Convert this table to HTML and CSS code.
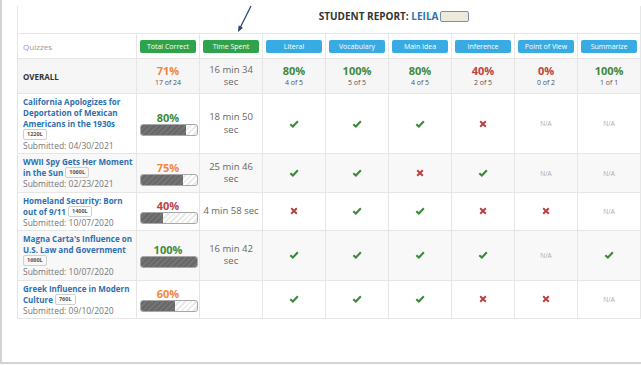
FILE: index.html
```html
<!DOCTYPE html>
<html lang="en">
<head>
<meta charset="utf-8">
<title>Student Report</title>
<link rel="stylesheet" href="styles.css">
</head>
<body>
<div class="frame">
  <svg class="arrow" width="30" height="34" viewBox="0 0 30 34">
    <line x1="21" y1="4" x2="10.5" y2="25" stroke="#2c4370" stroke-width="1.2"/>
    <polygon points="8,30 13,25.8 8.6,23.6" fill="#2c4370"/>
  </svg>
  <table class="report">
    <colgroup>
      <col class="c-quiz">
      <col class="c-data"><col class="c-data"><col class="c-data"><col class="c-data">
      <col class="c-data"><col class="c-data"><col class="c-data"><col class="c-data">
    </colgroup>
    <thead>
      <tr class="title-row">
        <th colspan="9"><span class="title">STUDENT REPORT: <span class="name">LEILA</span></span><span class="redact"></span></th>
      </tr>
      <tr class="head-row">
        <th class="quizzes">Quizzes</th>
        <th><span class="tag green">Total Correct</span></th>
        <th><span class="tag green">Time Spent</span></th>
        <th><span class="tag blue">Literal</span></th>
        <th><span class="tag blue">Vocabulary</span></th>
        <th><span class="tag blue">Main Idea</span></th>
        <th><span class="tag blue">Inference</span></th>
        <th><span class="tag blue">Point of View</span></th>
        <th><span class="tag blue">Summarize</span></th>
      </tr>
    </thead>
    <tbody>
      <tr class="overall">
        <td class="overall-label">OVERALL</td>
        <td><div class="pct orange">71%</div><div class="sub">17 of 24</div></td>
        <td class="time">16 min 34 sec</td>
        <td><div class="pct green-t">80%</div><div class="sub">4 of 5</div></td>
        <td><div class="pct green-t">100%</div><div class="sub">5 of 5</div></td>
        <td><div class="pct green-t">80%</div><div class="sub">4 of 5</div></td>
        <td><div class="pct red-t">40%</div><div class="sub">2 of 5</div></td>
        <td><div class="pct red-t">0%</div><div class="sub">0 of 2</div></td>
        <td><div class="pct green-t">100%</div><div class="sub">1 of 1</div></td>
      </tr>
      <tr>
        <td class="quiz"><a class="qt" href="#">California Apologizes for Deportation of Mexican Americans in the 1930s</a> <span class="lex">1220L</span><span class="sub-date">Submitted: 04/30/2021</span></td>
        <td><div class="pct green-t">80%</div><div class="bar"><div class="fill" style="width:80%"></div></div></td>
        <td class="time">18 min 50 sec</td>
        <td><svg class="ok" viewBox="0 0 12 10"><path d="M1.4 5.2 L4.6 8.2 L10.8 1.6"/></svg></td>
        <td><svg class="ok" viewBox="0 0 12 10"><path d="M1.4 5.2 L4.6 8.2 L10.8 1.6"/></svg></td>
        <td><svg class="ok" viewBox="0 0 12 10"><path d="M1.4 5.2 L4.6 8.2 L10.8 1.6"/></svg></td>
        <td><svg class="no" viewBox="0 0 10 10"><path d="M1.5 1.5 L8.5 8.5 M8.5 1.5 L1.5 8.5"/></svg></td>
        <td class="na">N/A</td>
        <td class="na">N/A</td>
      </tr>
      <tr class="alt">
        <td class="quiz"><a class="qt" href="#">WWII Spy Gets Her Moment in the Sun</a> <span class="lex">1060L</span><span class="sub-date">Submitted: 02/23/2021</span></td>
        <td><div class="pct orange">75%</div><div class="bar"><div class="fill" style="width:75%"></div></div></td>
        <td class="time">25 min 46 sec</td>
        <td><svg class="ok" viewBox="0 0 12 10"><path d="M1.4 5.2 L4.6 8.2 L10.8 1.6"/></svg></td>
        <td><svg class="ok" viewBox="0 0 12 10"><path d="M1.4 5.2 L4.6 8.2 L10.8 1.6"/></svg></td>
        <td><svg class="no" viewBox="0 0 10 10"><path d="M1.5 1.5 L8.5 8.5 M8.5 1.5 L1.5 8.5"/></svg></td>
        <td><svg class="ok" viewBox="0 0 12 10"><path d="M1.4 5.2 L4.6 8.2 L10.8 1.6"/></svg></td>
        <td class="na">N/A</td>
        <td class="na">N/A</td>
      </tr>
      <tr>
        <td class="quiz"><a class="qt" href="#">Homeland Security: Born out of 9/11</a> <span class="lex">1400L</span><span class="sub-date">Submitted: 10/07/2020</span></td>
        <td><div class="pct red-t">40%</div><div class="bar"><div class="fill" style="width:40%"></div></div></td>
        <td class="time">4 min 58 sec</td>
        <td><svg class="no" viewBox="0 0 10 10"><path d="M1.5 1.5 L8.5 8.5 M8.5 1.5 L1.5 8.5"/></svg></td>
        <td><svg class="ok" viewBox="0 0 12 10"><path d="M1.4 5.2 L4.6 8.2 L10.8 1.6"/></svg></td>
        <td><svg class="ok" viewBox="0 0 12 10"><path d="M1.4 5.2 L4.6 8.2 L10.8 1.6"/></svg></td>
        <td><svg class="no" viewBox="0 0 10 10"><path d="M1.5 1.5 L8.5 8.5 M8.5 1.5 L1.5 8.5"/></svg></td>
        <td><svg class="no" viewBox="0 0 10 10"><path d="M1.5 1.5 L8.5 8.5 M8.5 1.5 L1.5 8.5"/></svg></td>
        <td class="na">N/A</td>
      </tr>
      <tr class="alt">
        <td class="quiz"><a class="qt" href="#">Magna Carta's Influence on U.S. Law and Government</a> <span class="lex">1660L</span><span class="sub-date">Submitted: 10/07/2020</span></td>
        <td><div class="pct green-t">100%</div><div class="bar"><div class="fill" style="width:100%"></div></div></td>
        <td class="time">16 min 42 sec</td>
        <td><svg class="ok" viewBox="0 0 12 10"><path d="M1.4 5.2 L4.6 8.2 L10.8 1.6"/></svg></td>
        <td><svg class="ok" viewBox="0 0 12 10"><path d="M1.4 5.2 L4.6 8.2 L10.8 1.6"/></svg></td>
        <td><svg class="ok" viewBox="0 0 12 10"><path d="M1.4 5.2 L4.6 8.2 L10.8 1.6"/></svg></td>
        <td><svg class="ok" viewBox="0 0 12 10"><path d="M1.4 5.2 L4.6 8.2 L10.8 1.6"/></svg></td>
        <td class="na">N/A</td>
        <td><svg class="ok" viewBox="0 0 12 10"><path d="M1.4 5.2 L4.6 8.2 L10.8 1.6"/></svg></td>
      </tr>
      <tr>
        <td class="quiz"><a class="qt" href="#">Greek Influence in Modern Culture</a> <span class="lex">760L</span><span class="sub-date">Submitted: 09/10/2020</span></td>
        <td><div class="pct orange">60%</div><div class="bar"><div class="fill" style="width:60%"></div></div></td>
        <td class="time"></td>
        <td><svg class="ok" viewBox="0 0 12 10"><path d="M1.4 5.2 L4.6 8.2 L10.8 1.6"/></svg></td>
        <td><svg class="ok" viewBox="0 0 12 10"><path d="M1.4 5.2 L4.6 8.2 L10.8 1.6"/></svg></td>
        <td><svg class="ok" viewBox="0 0 12 10"><path d="M1.4 5.2 L4.6 8.2 L10.8 1.6"/></svg></td>
        <td><svg class="no" viewBox="0 0 10 10"><path d="M1.5 1.5 L8.5 8.5 M8.5 1.5 L1.5 8.5"/></svg></td>
        <td><svg class="no" viewBox="0 0 10 10"><path d="M1.5 1.5 L8.5 8.5 M8.5 1.5 L1.5 8.5"/></svg></td>
        <td class="na">N/A</td>
      </tr>
    </tbody>
  </table>
</div>
</body>
</html>
```
FILE: styles.css
```css
body {
  margin: 0;
  background: #fff;
  font-family: "Open Sans", "Liberation Sans", sans-serif;
  color: #555;
}

.frame {
  position: relative;
  box-sizing: border-box;
  height: 364px;
  border-left: 2px solid #d2d2d2;
  border-bottom: 2px solid #d2d2d2;
  padding: 6px 0 0 15px;
}

.arrow {
  position: absolute;
  left: 228px;
  top: 2px;
}

.report {
  border-collapse: collapse;
  table-layout: fixed;
  width: 623px;
}

.c-quiz { width: 119px; }
.c-data { width: 63px; }

.report th,
.report td {
  border: 1px solid #e6e6e6;
  text-align: center;
  vertical-align: middle;
  padding: 0 3px;
}

/* title row */
.title-row th {
  border-top: none;
  padding: 3px 0 10px 130px;
  line-height: 14px;
  font-size: 10px;
  font-weight: 700;
  color: #333;
}
.name { color: #2f72b5; }
.redact {
  display: inline-block;
  box-sizing: border-box;
  width: 29px;
  height: 11px;
  margin-left: 2px;
  vertical-align: -2px;
  background: #ece9dd;
  border: 1px solid #7d8ea9;
  border-radius: 2px;
}

/* header row */
.head-row th {
  height: 24px;
  padding: 0 3px;
  font-weight: 400;
}
.head-row .quizzes {
  text-align: left;
  padding-left: 5px;
  font-size: 8px;
  color: #999;
}
.tag {
  display: block;
  height: 13px;
  line-height: 13px;
  border-radius: 2px;
  font-size: 7px;
  color: #fff;
  white-space: nowrap;
}
.tag.green { background: #2fa34c; }
.tag.blue { background: #38abe2; }

/* body rows */
.report .overall td {
  background: #f6f6f6;
  height: 34px;
  padding: 0 3px;
}
.report .overall td.overall-label {
  text-align: left;
  padding: 0 3px 0 5px;
  font-size: 8px;
  font-weight: 700;
  color: #333;
}
.alt td { background: #f8f8f8; }

.report td.quiz {
  text-align: left;
  padding: 2px 2px 2.4px 5px;
  line-height: 11px;
  font-size: 8px;
}

.qt {
  font-weight: 700;
  color: #2e6fb0;
  text-decoration: none;
}
.lex {
  display: inline-block;
  box-sizing: border-box;
  height: 11px;
  line-height: 9px;
  padding: 0 3px;
  border: 1px solid #cfcfcf;
  border-radius: 2px;
  font-size: 5.5px;
  font-weight: 700;
  color: #555;
  vertical-align: top;
}
.sub-date {
  display: block;
  font-size: 8.5px;
  line-height: 11px;
  color: #777;
}

.pct {
  font-size: 11px;
  font-weight: 700;
  line-height: 13px;
}
.orange { color: #f0883a; }
.green-t { color: #3f8a3c; }
.red-t { color: #c0423d; }

.sub {
  font-size: 7px;
  line-height: 11px;
  color: #555;
}

.time {
  font-size: 9.5px;
  line-height: 12.5px;
  color: #666;
}

.bar {
  box-sizing: border-box;
  width: 58px;
  height: 12px;
  margin: 0 auto;
  border: 1px solid #a8a8a8;
  border-radius: 3px;
  overflow: hidden;
  background: repeating-linear-gradient(-45deg, #fff 0 2px, #ebebeb 2px 4px);
}
.fill {
  height: 100%;
  background: repeating-linear-gradient(-45deg, #686868 0 2px, #747474 2px 4px);
}

.ok {
  width: 10px;
  height: 8px;
  display: block;
  margin: 0 auto;
}
.ok path {
  fill: none;
  stroke: #3b8a3a;
  stroke-width: 2.6;
}
.no {
  width: 8px;
  height: 8px;
  display: block;
  margin: 0 auto;
}
.no path {
  fill: none;
  stroke: #bb3f3b;
  stroke-width: 2.4;
}

.na {
  font-size: 6.5px;
  color: #aaa;
}
```
